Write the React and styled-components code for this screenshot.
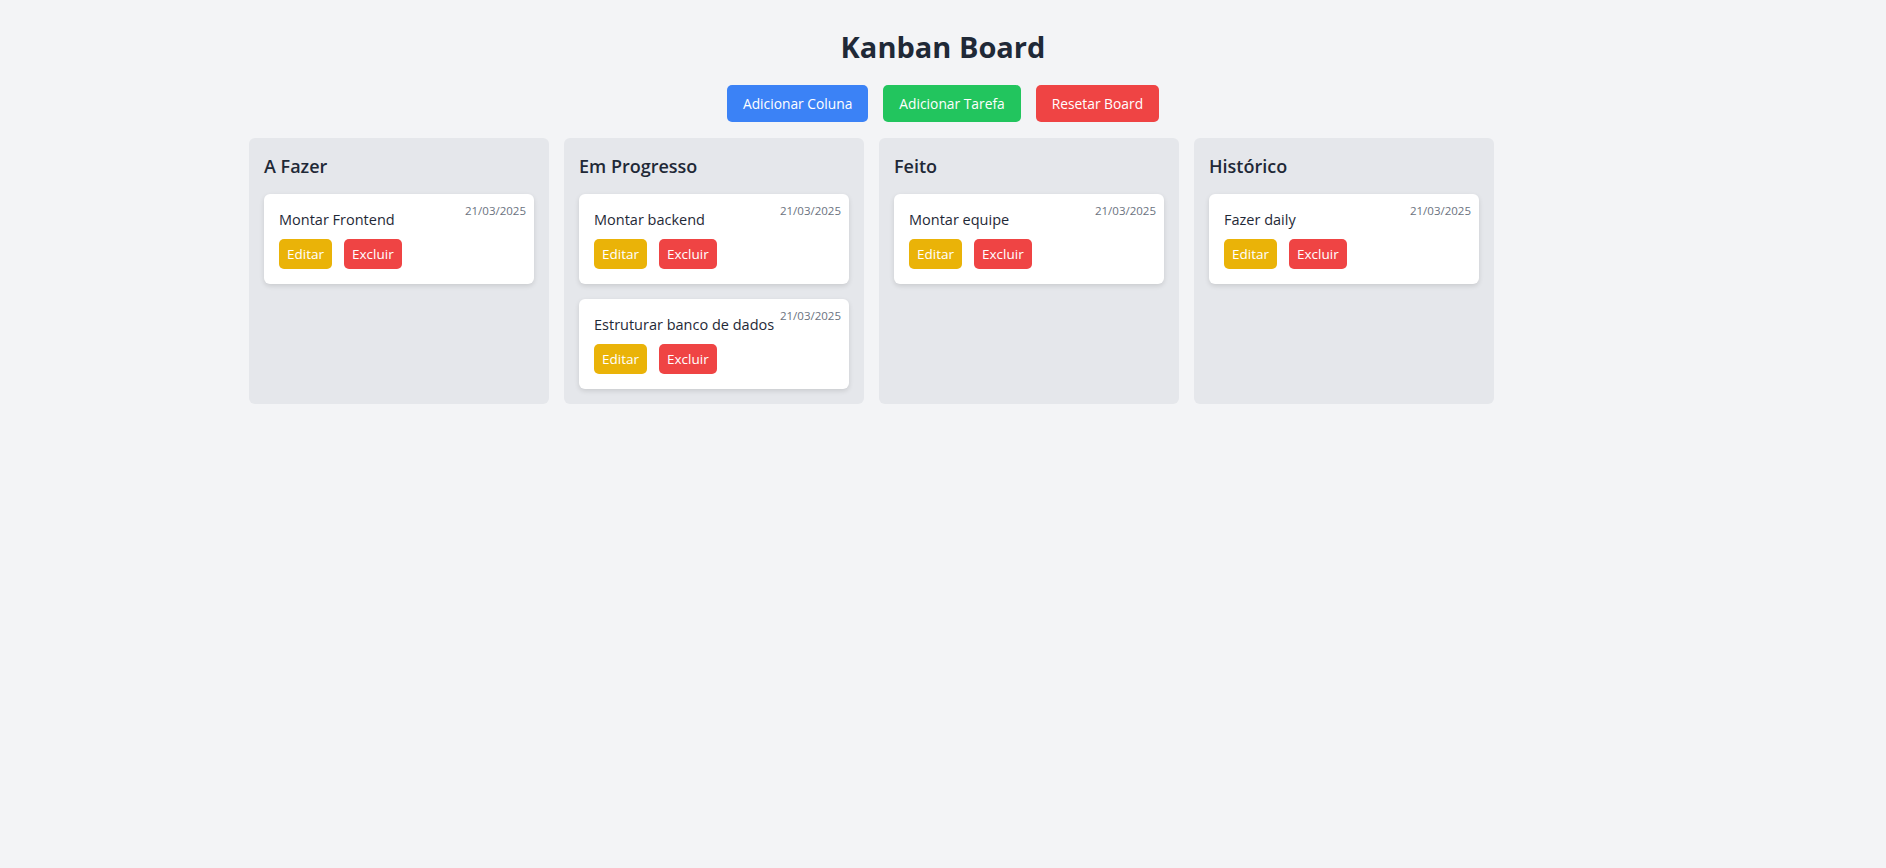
import React from "react";
import styled, { createGlobalStyle } from "styled-components";

const GlobalStyle = createGlobalStyle`
  body {
    margin: 0;
    background: #f3f4f6;
    font-family: "Open Sans", "Noto Sans", sans-serif;
    color: #1f2937;
  }
`;

const columns = [
  { title: "A Fazer", tasks: [{ text: "Montar Frontend", date: "21/03/2025" }] },
  {
    title: "Em Progresso",
    tasks: [
      { text: "Montar backend", date: "21/03/2025" },
      { text: "Estruturar banco de dados", date: "21/03/2025" },
    ],
  },
  { title: "Feito", tasks: [{ text: "Montar equipe", date: "21/03/2025" }] },
  { title: "Histórico", tasks: [{ text: "Fazer daily", date: "21/03/2025" }] },
];

export default function App() {
  return (
    <Page>
      <GlobalStyle />
      <Title>Kanban Board</Title>
      <Toolbar>
        <ActionButton color="#3b82f6">Adicionar Coluna</ActionButton>
        <ActionButton color="#22c55e">Adicionar Tarefa</ActionButton>
        <ActionButton color="#ef4444">Resetar Board</ActionButton>
      </Toolbar>
      <Board>
        {columns.map((col) => (
          <Column key={col.title}>
            <ColumnTitle>{col.title}</ColumnTitle>
            <TaskList>
              {col.tasks.map((task) => (
                <Card key={task.text}>
                  <CardDate>{task.date}</CardDate>
                  <CardText>{task.text}</CardText>
                  <CardActions>
                    <SmallButton color="#eab308">Editar</SmallButton>
                    <SmallButton color="#ef4444">Excluir</SmallButton>
                  </CardActions>
                </Card>
              ))}
            </TaskList>
          </Column>
        ))}
      </Board>
    </Page>
  );
}

const Page = styled.div`
  min-height: 100vh;
  padding-top: 29px;
  box-sizing: border-box;
`;

const Title = styled.h1`
  margin: 0 0 20px;
  text-align: center;
  font-size: 29px;
  line-height: 36px;
  font-weight: 700;
  color: #1f2937;
`;

const Toolbar = styled.div`
  display: flex;
  justify-content: center;
  gap: 15px;
  margin-bottom: 16px;
`;

const ActionButton = styled.button`
  height: 37px;
  padding: 0 16px;
  border: none;
  border-radius: 5px;
  background: ${(p) => p.color};
  color: #fff;
  font-family: inherit;
  font-size: 13.8px;
  cursor: pointer;
`;

const Board = styled.div`
  display: flex;
  align-items: stretch;
  gap: 15px;
  max-width: 1388px;
  margin: 0 auto;
`;

const Column = styled.div`
  width: 300px;
  box-sizing: border-box;
  padding: 15px;
  background: #e5e7eb;
  border-radius: 6px;
`;

const ColumnTitle = styled.h2`
  margin: 0 0 15px;
  font-size: 18px;
  line-height: 26px;
  font-weight: 600;
  color: #1f2937;
`;

const TaskList = styled.div`
  display: flex;
  flex-direction: column;
  gap: 15px;
`;

const Card = styled.div`
  position: relative;
  padding: 15px;
  background: #fff;
  border-radius: 6px;
  box-shadow: 0 2px 5px rgba(0, 0, 0, 0.12);
`;

const CardDate = styled.span`
  position: absolute;
  top: 9px;
  right: 8px;
  font-size: 11.5px;
  line-height: 16px;
  color: #6b7280;
`;

const CardText = styled.p`
  margin: 0 0 8px;
  font-size: 14.5px;
  line-height: 22px;
  color: #1f2937;
`;

const CardActions = styled.div`
  display: flex;
  gap: 12px;
`;

const SmallButton = styled.button`
  height: 30px;
  padding: 0 8px;
  border: none;
  border-radius: 5px;
  background: ${(p) => p.color};
  color: #fff;
  font-family: inherit;
  font-size: 13.5px;
  cursor: pointer;
`;
